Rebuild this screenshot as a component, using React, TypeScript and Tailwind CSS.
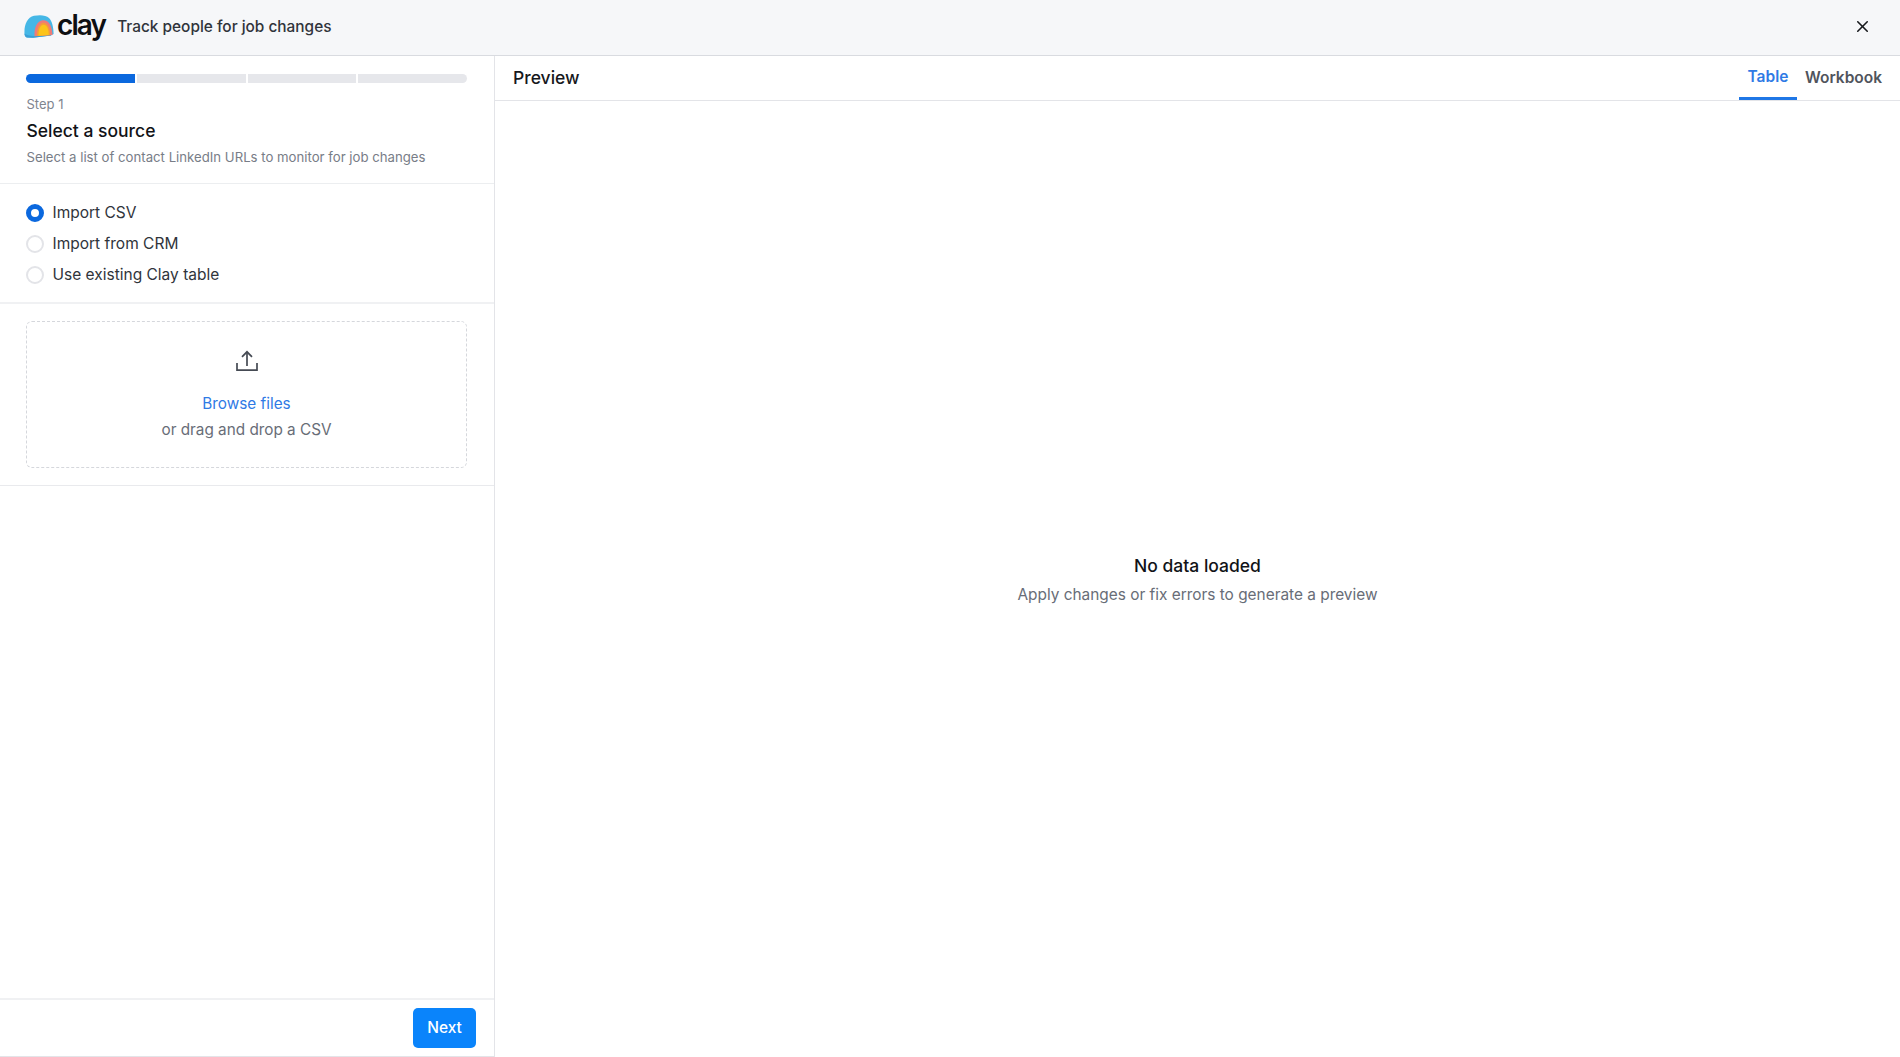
import { X } from "lucide-react";

const sources = ["Import CSV", "Import from CRM", "Use existing Clay table"];

function ClayLogo() {
  return (
    <svg width="30" height="24" viewBox="0 0 30 24" fill="none">
      <path d="M0.5 18.5 C0 10 3 2.5 10 0.8 C16 -0.4 22 0 25 3 C28 6 29.6 12 29.6 19 L27 20.5 L9 22.8 L3 22.5 C1.2 22 0.6 20.5 0.5 18.5Z" fill="#45b7e6" />
      <path d="M0.5 18.5 C2 20 6 21 10 21 L27 20 L27 20.5 L9 22.8 L3 22.5 C1.2 22 0.6 20.5 0.5 18.5Z" fill="#3a9fd6" />
      <path d="M10.5 21.3 C10 12.5 13 5.6 19 5.2 C25 5 28 11 28.5 20 Z" fill="#ee7a78" />
      <path d="M12.8 21 C12.6 14 15 8 19.4 7.8 C23.8 7.8 26 13 26.2 20.2 Z" fill="#f59a3c" />
      <path d="M14.5 20.8 C14.5 14.5 16 10 19.6 9.8 C23 9.8 24.6 14 24.8 20 Z" fill="#fcc419" />
    </svg>
  );
}

export default function App() {
  return (
    <div
      className="h-[1057px] w-[1900px] flex flex-col overflow-hidden bg-white text-[#0f1115]"
      style={{ fontFamily: "Inter, 'Liberation Sans', sans-serif" }}
    >
      {/* Header */}
      <div className="h-[56px] shrink-0 flex items-center justify-between border-b border-[#d9dbe0] bg-[#f6f7f9] pl-[24px] pr-[28px] pb-[1px]">
        <div className="flex items-center">
          <ClayLogo />
          <span className="ml-[3px] text-[28px] leading-none font-semibold tracking-[-1.9px] text-[#0e0f12] -mt-[4px]">clay</span>
          <span className="ml-[12px] text-[15.4px] font-medium text-[#30343b]">Track people for job changes</span>
        </div>
        <X size={19} strokeWidth={2} className="text-[#17191d] -mt-[1px]" />
      </div>

      <div className="flex flex-1 min-h-0">
        {/* Left column */}
        <div className="w-[495px] shrink-0 flex flex-col border-r border-[#e3e4e8] border-b">
          <div className="h-[128px] shrink-0 border-b border-[#eceef0] pl-[26px] pr-[27px] pt-[18px]">
            <div className="flex gap-[2px] h-[9px] -mt-[0.5px]">
              <div className="flex-1 bg-[#0b68de] rounded-l-full" />
              <div className="flex-1 bg-[#e6e7eb]" />
              <div className="flex-1 bg-[#e6e7eb]" />
              <div className="flex-1 bg-[#e6e7eb] rounded-r-full" />
            </div>
            <div className="mt-[11px] ml-[0.5px] text-[13px] leading-[20px] text-[#80858f]">Step 1</div>
            <div className="mt-[4px] ml-[0.5px] text-[17.5px] leading-[25px] font-medium text-[#111317]">Select a source</div>
            <div className="mt-[4px] ml-[0.5px] text-[13.2px] leading-[20px] text-[#787d87]">Select a list of contact LinkedIn URLs to monitor for job changes</div>
          </div>

          <div className="h-[120px] shrink-0 border-b-2 border-[#f0f1f3] px-[26px] pt-[20px] flex flex-col gap-[13px]">
            {sources.map((label, i) => (
              <div key={label} className="flex items-center gap-[8.5px] h-[18px]">
                {i === 0 ? (
                  <span className="w-[18px] h-[18px] rounded-full border-[5px] border-[#0b68de] bg-white" />
                ) : (
                  <span className="w-[18px] h-[18px] rounded-full border-2 border-[#e3e4e8] bg-white" />
                )}
                <span className="text-[15.5px] text-[#30343b]">{label}</span>
              </div>
            ))}
          </div>

          <div className="h-[182px] shrink-0 border-b border-[#e9eaed] pl-[26px] pr-[27px] pt-[17px]">
            <div className="h-[147px] border border-dashed border-[#d5d7dc] rounded-[6px] flex flex-col items-center pt-[28px]">
              <svg width="22" height="22" viewBox="0 0 22 22" fill="none" stroke="#454a53" strokeWidth="1.7">
                <path d="M1 13 V20.2 H21 V13" />
                <path d="M11 16 V2" />
                <path d="M6 6.8 L11 1.8 L16 6.8" />
              </svg>
              <div className="mt-[20px] text-[15.3px] leading-[24px] text-[#2f7ae5]">Browse files</div>
              <div className="mt-[2px] text-[15.3px] leading-[24px] text-[#686d77]">or drag and drop a CSV</div>
            </div>
          </div>

          <div className="flex-1" />

          <div className="h-[58px] shrink-0 border-t-2 border-[#f0f1f3] flex items-start justify-end pr-[18px] pt-[8px]">
            <button className="w-[63px] h-[40px] rounded-[5px] bg-[#0a84fb] text-white text-[15.5px] font-medium">Next</button>
          </div>
        </div>

        {/* Preview */}
        <div className="flex-1 flex flex-col min-w-0">
          <div className="h-[45px] shrink-0 border-b border-[#e3e4e8] flex items-center justify-between pl-[18px] pr-[18px]">
            <span className="text-[17.5px] font-medium text-[#16181c]">Preview</span>
            <div className="flex h-full gap-[8px]">
              <div className="w-[58px] flex items-center justify-center border-b-[3px] border-[#1f77e6] pt-[1px]">
                <span className="text-[15.5px] font-semibold text-[#2f7ae5]">Table</span>
              </div>
              <div className="flex items-center">
                <span className="text-[15.5px] font-semibold text-[#50545c]">Workbook</span>
              </div>
            </div>
          </div>
          <div className="flex-1 flex flex-col items-center justify-center pt-[2px]">
            <div className="text-[17.5px] leading-[26px] font-medium text-[#111317]">No data loaded</div>
            <div className="mt-[4px] text-[15.4px] leading-[24px] text-[#686d77]">Apply changes or fix errors to generate a preview</div>
          </div>
        </div>
      </div>
    </div>
  );
}
